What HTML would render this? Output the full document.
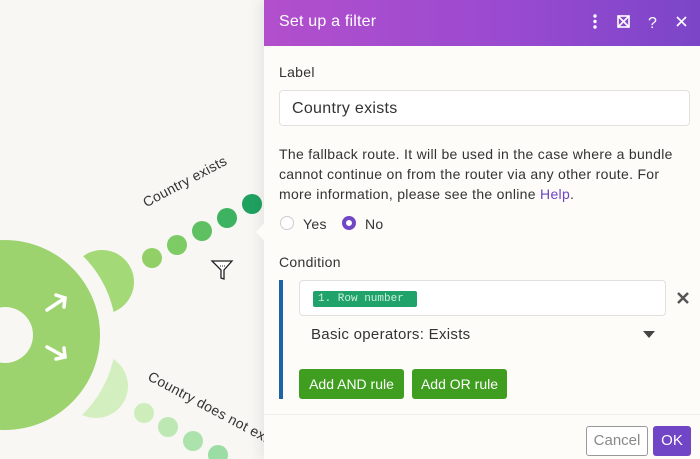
<!DOCTYPE html>
<html><head><style>
*{box-sizing:border-box;margin:0;padding:0}
html,body{width:700px;height:459px;overflow:hidden}
body{background:#f8f7f4;font-family:"Liberation Sans",sans-serif;position:relative}
.c{position:absolute;border-radius:50%}
.panel{position:absolute;left:264px;top:0;width:436px;height:459px;background:#fdfcf9;box-shadow:-6px 0 10px rgba(0,0,0,0.06)}
.hdr{height:46px;background:linear-gradient(90deg,#b24fcc 0%,#9a4ad0 55%,#7b45c8 100%);color:#fff;font-size:16px;padding:13px 15px;letter-spacing:0.2px}
.t{position:absolute;color:#333;font-size:14px;white-space:nowrap;letter-spacing:0.3px}
.btn{position:absolute;top:369px;height:30px;background:#3f9e1f;border-radius:3px;color:#fff;font-size:14px;line-height:30px;text-align:center;white-space:nowrap}
</style></head><body>
<div class="c" style="left:70px;top:250px;width:64px;height:64px;background:#a4d977"></div>
<div class="c" style="left:64px;top:354px;width:64px;height:64px;background:#d4efbf"></div>
<div class="c" style="left:-106px;top:224px;width:222px;height:222px;background:#f8f7f4"></div>
<div class="c" style="left:-90px;top:240px;width:190px;height:190px;background:#9dd36f"></div>
<div class="c" style="left:-23px;top:307px;width:56px;height:56px;background:#f8f7f4"></div>
<svg style="position:absolute;left:40px;top:285px" width="40" height="90"><g stroke="#fff" stroke-width="3.5" fill="none" stroke-linecap="round"><path d="M7 25 L25 13 M16 10 L25 13 L24 22"/><path d="M7 62 L25 72 M24 63 L25 72 L16 74"/></g></svg>
<div class="c" style="left:142px;top:248px;width:20px;height:20px;background:#92cf66"></div>
<div class="c" style="left:167px;top:235px;width:20px;height:20px;background:#7ccb64"></div>
<div class="c" style="left:192px;top:221px;width:20px;height:20px;background:#5fc062"></div>
<div class="c" style="left:217px;top:208px;width:20px;height:20px;background:#3db362"></div>
<div class="c" style="left:242px;top:194px;width:20px;height:20px;background:#1fa260"></div>
<div class="c" style="left:134px;top:403px;width:20px;height:20px;background:#cdeebb"></div>
<div class="c" style="left:158px;top:417px;width:20px;height:20px;background:#bde8b3"></div>
<div class="c" style="left:183px;top:431px;width:20px;height:20px;background:#ace3ac"></div>
<div class="c" style="left:208px;top:445px;width:20px;height:20px;background:#9bdda5"></div>
<div class="t" style="left:140px;top:196px;transform:rotate(-28deg);transform-origin:left top">Country exists</div>
<div class="t" style="left:153px;top:368px;transform:rotate(28deg);transform-origin:left top">Country does not exists</div>
<svg style="position:absolute;left:210px;top:258px" width="26" height="24"><path d="M2 3 H22 L14 12 V21 L11 20 V12 Z" fill="#fff" stroke="#222" stroke-width="1.3"/><path d="M10 8 h5" stroke="#222" stroke-dasharray="1 1"/></svg>
<div class="panel">
<svg style="position:absolute;left:-8px;top:222px" width="9" height="20"><path d="M9 0 L0 10 L9 20Z" fill="#fdfcf9"/></svg>
<div class="hdr">Set up a filter
<svg style="position:absolute;left:322px;top:13px" width="110" height="20"><g fill="#fff"><circle cx="9" cy="3" r="1.7"/><circle cx="9" cy="8.5" r="1.7"/><circle cx="9" cy="14" r="1.7"/></g><g stroke="#fff" stroke-width="1.6" fill="none"><rect x="32" y="3" width="11" height="11"/><path d="M32 3 L43 14 M43 3 L32 14"/><path d="M91 4 L100 13 M100 4 L91 13"/></g><text x="62" y="15" fill="#fff" font-size="16" font-family="Liberation Sans">?</text></svg></div>
<div class="t" style="left:15px;top:64px">Label</div>
<div style="position:absolute;left:15px;top:90px;width:411px;height:36px;border:1px solid #e2e0dc;border-radius:4px;background:#fff;font-size:16px;color:#333;padding:9px 12px;letter-spacing:0.3px">Country exists</div>
<div class="t" style="left:15px;top:144px;width:410px;line-height:20px;white-space:normal">The fallback route. It will be used in the case where a bundle cannot continue on from the router via any other route. For more information, please see the online <span style="color:#6c44c4">Help</span>.</div>
<div class="c" style="left:16px;top:216px;width:14px;height:14px;border:1px solid #ccc;background:#fff"></div>
<div class="t" style="left:39px;top:216px">Yes</div>
<div class="c" style="left:78px;top:216px;width:14px;height:14px;border:4px solid #7045c6;background:#fff"></div>
<div class="t" style="left:101px;top:216px">No</div>
<div class="t" style="left:15px;top:254px">Condition</div>
<div style="position:absolute;left:15px;top:280px;width:4px;height:119px;background:#1c64a8"></div>
<div style="position:absolute;left:35px;top:280px;width:367px;height:36px;border:1px solid #e2e0dc;border-radius:4px;background:#fff"></div>
<div style="position:absolute;left:49px;top:291px;width:104px;height:16px;background:#1fa36a;border-radius:2px;color:#cdeedd;font-family:'Liberation Mono',monospace;font-size:11px;line-height:16px;padding:0 5px;white-space:nowrap">1. Row number</div>
<svg style="position:absolute;left:412px;top:291px" width="14" height="14"><path d="M2 2 L12 12 M12 2 L2 12" stroke="#555" stroke-width="2.5"/></svg>
<div class="t" style="left:47px;top:326px;font-size:15px">Basic operators: Exists</div>
<svg style="position:absolute;left:379px;top:331px" width="12" height="7"><path d="M0 0 H12 L6 7Z" fill="#444"/></svg>
<div class="btn" style="left:35px;width:105px">Add AND rule</div>
<div class="btn" style="left:148px;width:95px">Add OR rule</div>
<div style="position:absolute;left:0;top:414px;width:436px;height:1px;background:#f0eeea"></div>
<div style="position:absolute;left:322px;top:426px;width:62px;height:30px;border:1px solid #999;border-radius:3px;color:#888;font-size:15px;line-height:28px;text-align:center;background:#fff">Cancel</div>
<div style="position:absolute;left:389px;top:426px;width:38px;height:30px;background:#7045c6;border-radius:3px;color:#fff;font-size:15px;line-height:30px;text-align:center">OK</div>
</div>
</body></html>
